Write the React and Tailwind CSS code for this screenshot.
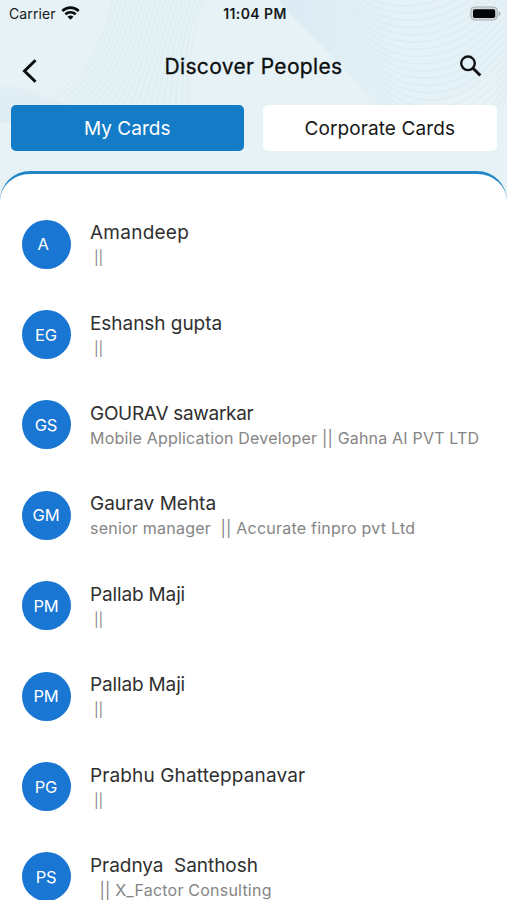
import React from 'react';

const people = [
  { initials: 'A', name: 'Amandeep', detail: ' ||', nameClass: 'tracking-[0.25px]', detailClass: 'text-[14px]', shift: 'pr-[6px]' },
  { initials: 'EG', name: 'Eshansh gupta', detail: ' ||', nameClass: 'tracking-[-0.05px]', detailClass: 'text-[14px]' },
  { initials: 'GS', name: 'GOURAV sawarkar', detail: 'Mobile Application Developer || Gahna AI PVT LTD', nameClass: 'tracking-[-0.3px]', detailClass: 'text-[16px] tracking-[0.19px]' },
  { initials: 'GM', name: 'Gaurav Mehta', detail: 'senior manager  || Accurate finpro pvt Ltd', nameClass: 'tracking-[0px]', detailClass: 'text-[16px] tracking-[0.23px]' },
  { initials: 'PM', name: 'Pallab Maji', detail: ' ||', nameClass: 'tracking-[-0.15px]', detailClass: 'text-[14px]' },
  { initials: 'PM', name: 'Pallab Maji', detail: ' ||', nameClass: 'tracking-[-0.15px]', detailClass: 'text-[14px]' },
  { initials: 'PG', name: 'Prabhu Ghatteppanavar', detail: ' ||', nameClass: 'tracking-[0.13px]', detailClass: 'text-[14px]' },
  { initials: 'PS', name: 'Pradnya  Santhosh', detail: '  || X_Factor Consulting', nameClass: 'tracking-[-0.05px]', detailClass: 'text-[16px] tracking-[0.22px]' },
];

// Thin contour lines behind the header
function HeaderPattern() {
  const left = Array.from({ length: 22 }, (_, i) => i);
  const right = Array.from({ length: 22 }, (_, i) => i);
  return (
    <svg className="absolute inset-0 h-full w-full" viewBox="0 0 507 210" preserveAspectRatio="none" fill="none">
      <defs>
        <linearGradient id="band" x1="278" y1="0" x2="400" y2="0" gradientUnits="userSpaceOnUse">
          <stop stopColor="#dae9f3" />
          <stop offset=".45" stopColor="#dfedf5" />
          <stop offset="1" stopColor="#e4f1f6" />
        </linearGradient>
        <linearGradient id="wave" x1="0" y1="85" x2="0" y2="123" gradientUnits="userSpaceOnUse">
          <stop stopColor="#e1eef4" />
          <stop offset="1" stopColor="#deecf3" />
        </linearGradient>
      </defs>
      <path d="M278 0H507V55C480 88 445 108 375 108C345 62 310 38 278 0Z" fill="url(#band)" />
      <path d="M0 87C22 84 34 94 58 101C80 108 100 110 120 123H0Z" fill="url(#wave)" />
      <path d="M112 0H205C186 30 183 66 189 106H60C85 78 103 40 112 0Z" fill="#e1eff5" opacity=".4" />
      <g stroke="#d3e5ef" strokeWidth=".7" opacity=".65">
        {left.map((i) => (
          <path key={i} d={`M${114 + i * 4.3} -3C${103 + i * 4.2} 38 ${93 + i * 4.4} 72 ${50 + i * 6.6} ${97 + i * 0.8}`} />
        ))}
      </g>
      <g stroke="#d5e3eb" strokeWidth=".8" opacity=".7">
        {right.map((i) => (
          <path key={i} d={`M${330 + i * 2.4} ${-48 + i * 7.2}C${365 + i * 2} ${-10 + i * 7.2} ${430 + i * 2} ${10 + i * 7.2} 515 ${-80 + i * 7.6}`} />
        ))}
      </g>
    </svg>
  );
}

function StatusBar() {
  return (
    <div className="grid h-[27px] grid-cols-3 items-center pl-[9px] pr-[6px] text-[#17191b]">
      <div className="flex items-center gap-[5px]">
        <span className="text-[14px] tracking-[0.1px]">Carrier</span>
        <svg className="mb-px h-[14px] w-[19px]" viewBox="0 0 18 14" fill="none" stroke="#090b0c" strokeWidth="2.7">
          <path d="M.8 4.9C5.6.6 12.4.6 17.2 4.9" />
          <path d="M3.8 8.3C6.9 5.6 11.1 5.6 14.2 8.3" />
          <path d="M6 10.8C7.9 9.2 10.1 9.2 12 10.8L9 13.8Z" fill="#090b0c" stroke="none" />
        </svg>
      </div>
      <span className="text-center text-[14px] font-semibold tracking-[0.4px]">11:04 PM</span>
      <svg className="mb-px h-[15px] w-[31px] justify-self-end" viewBox="0 0 31 15" fill="none">
        <rect x=".8" y="1" width="26.5" height="13" rx="4" fill="#d1dadd" stroke="#a7afb1" />
        <rect x="3" y="3.2" width="22.2" height="8.8" rx="1.8" fill="#050607" />
        <path d="M28.6 5.2C31 6 31 9 28.6 9.8Z" fill="#a7afb1" />
      </svg>
    </div>
  );
}

export default function App() {
  return (
    <div className="h-[900px] w-full overflow-hidden bg-white font-['Inter',sans-serif] antialiased">
      <header className="relative h-[210px] bg-[#e6f2f5]">
        <HeaderPattern />
        <div className="relative">
          <StatusBar />
          <div className="flex h-[78px] items-center justify-between pl-[22px] pr-[25px]">
            <button aria-label="Back" className="pt-[9px]">
              <svg className="h-6 w-[15px]" viewBox="0 0 15 24" fill="none" stroke="#0b0d0e" strokeWidth="3">
                <path d="M13.5 1.2L2.5 12L13.5 22.8" />
              </svg>
            </button>
            <h1 className="pl-[10px] pt-[2px] text-[21px] font-normal tracking-[0.36px] text-[#0c0e0f] [-webkit-text-stroke:0.3px_#0c0e0f]">Discover Peoples</h1>
            <button aria-label="Search">
              <svg className="mb-px h-[22px] w-[22px]" viewBox="0 0 22 22" fill="none" stroke="#101213" strokeWidth="2.4">
                <circle cx="8" cy="8.3" r="6.8" />
                <path d="M12.8 13L20.3 20.5" strokeWidth="3" />
              </svg>
            </button>
          </div>
          <div className="grid grid-cols-2 gap-[19px] px-[10.5px]">
            <button className="h-[46px] rounded-[5px] bg-[#147bc7] pt-[2px] text-[19px] text-white">My Cards</button>
            <button className="h-[46px] rounded-[5px] bg-white pt-[2px] text-[19px] tracking-[0.1px] text-[#171717]">Corporate Cards</button>
          </div>
        </div>
      </header>

      <main className="relative -mt-[39px] rounded-t-[30px] border-t-[3px] border-[#2386c4] bg-white pt-[25px]">
        {people.map((person, index) => (
          <div key={index} className="flex h-[90.4px] items-center gap-[19.5px] pl-[21.5px]">
            <div className={`flex h-[49px] w-[49px] shrink-0 items-center justify-center rounded-full bg-[#1976d2] pt-px text-[16.5px] tracking-[-0.2px] text-white ${person.shift || ''}`}>
              {person.initials}
            </div>
            <div className="whitespace-pre pt-px">
              <p className={`text-[19px] leading-[26px] text-[#303030] ${person.nameClass}`}>{person.name}</p>
              <p className={`leading-[23px] text-[#858585] ${person.detailClass}`}>{person.detail}</p>
            </div>
          </div>
        ))}
      </main>
    </div>
  );
}
